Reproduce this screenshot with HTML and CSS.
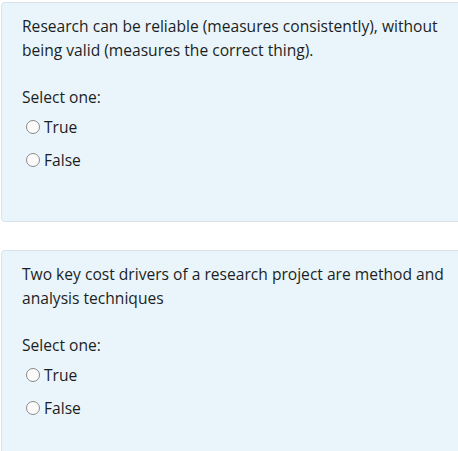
FILE: index.html
```
<!DOCTYPE html>
<html>
<head>
<meta charset="utf-8">
<link rel="stylesheet" href="styles.css">
</head>
<body>
<div class="page">
  <div class="card card-first">
    <div class="qtext">Research can be reliable (measures consistently), without being valid (measures the correct thing).</div>
    <div class="prompt">Select one:</div>
    <div class="answers">
      <label class="option"><span class="radio"></span><span class="label">True</span></label>
      <label class="option"><span class="radio"></span><span class="label">False</span></label>
    </div>
  </div>
  <div class="card card-second">
    <div class="qtext">Two key cost drivers of a research project are method and analysis techniques</div>
    <div class="prompt">Select one:</div>
    <div class="answers">
      <label class="option"><span class="radio"></span><span class="label">True</span></label>
      <label class="option"><span class="radio"></span><span class="label">False</span></label>
    </div>
  </div>
</div>
</body>
</html>
```

FILE: styles.css
```
html, body {
  margin: 0;
  padding: 0;
  background: #ffffff;
  overflow: hidden;
}
.page {
  padding: 2px 0 0 1px;
  width: 480px;
  font-family: "Open Sans", "Noto Sans", sans-serif;
  font-size: 15.6px;
  font-weight: 500;
  line-height: 24px;
  color: #1b1f23;
}
.card {
  background: #eaf5fb;
  border: 1px solid #d4e4e9;
  border-radius: 4px;
  padding: 11px 20px 0 20px;
}
.card-first {
  height: 207px;
}
.card-second {
  margin-top: 28px;
  height: 230px;
}
.qtext {
  width: 425px;
}
.prompt {
  margin-top: 23px;
}
.answers {
  display: flex;
  flex-direction: column;
  gap: 9px;
  margin-top: 6px;
}
.option {
  display: flex;
  align-items: center;
}
.radio {
  width: 14px;
  height: 14px;
  box-sizing: border-box;
  border: 1px solid #8a8a8a;
  border-radius: 50%;
  background: #fbfbfb;
  margin-left: 4px;
  margin-right: 4px;
}
```
